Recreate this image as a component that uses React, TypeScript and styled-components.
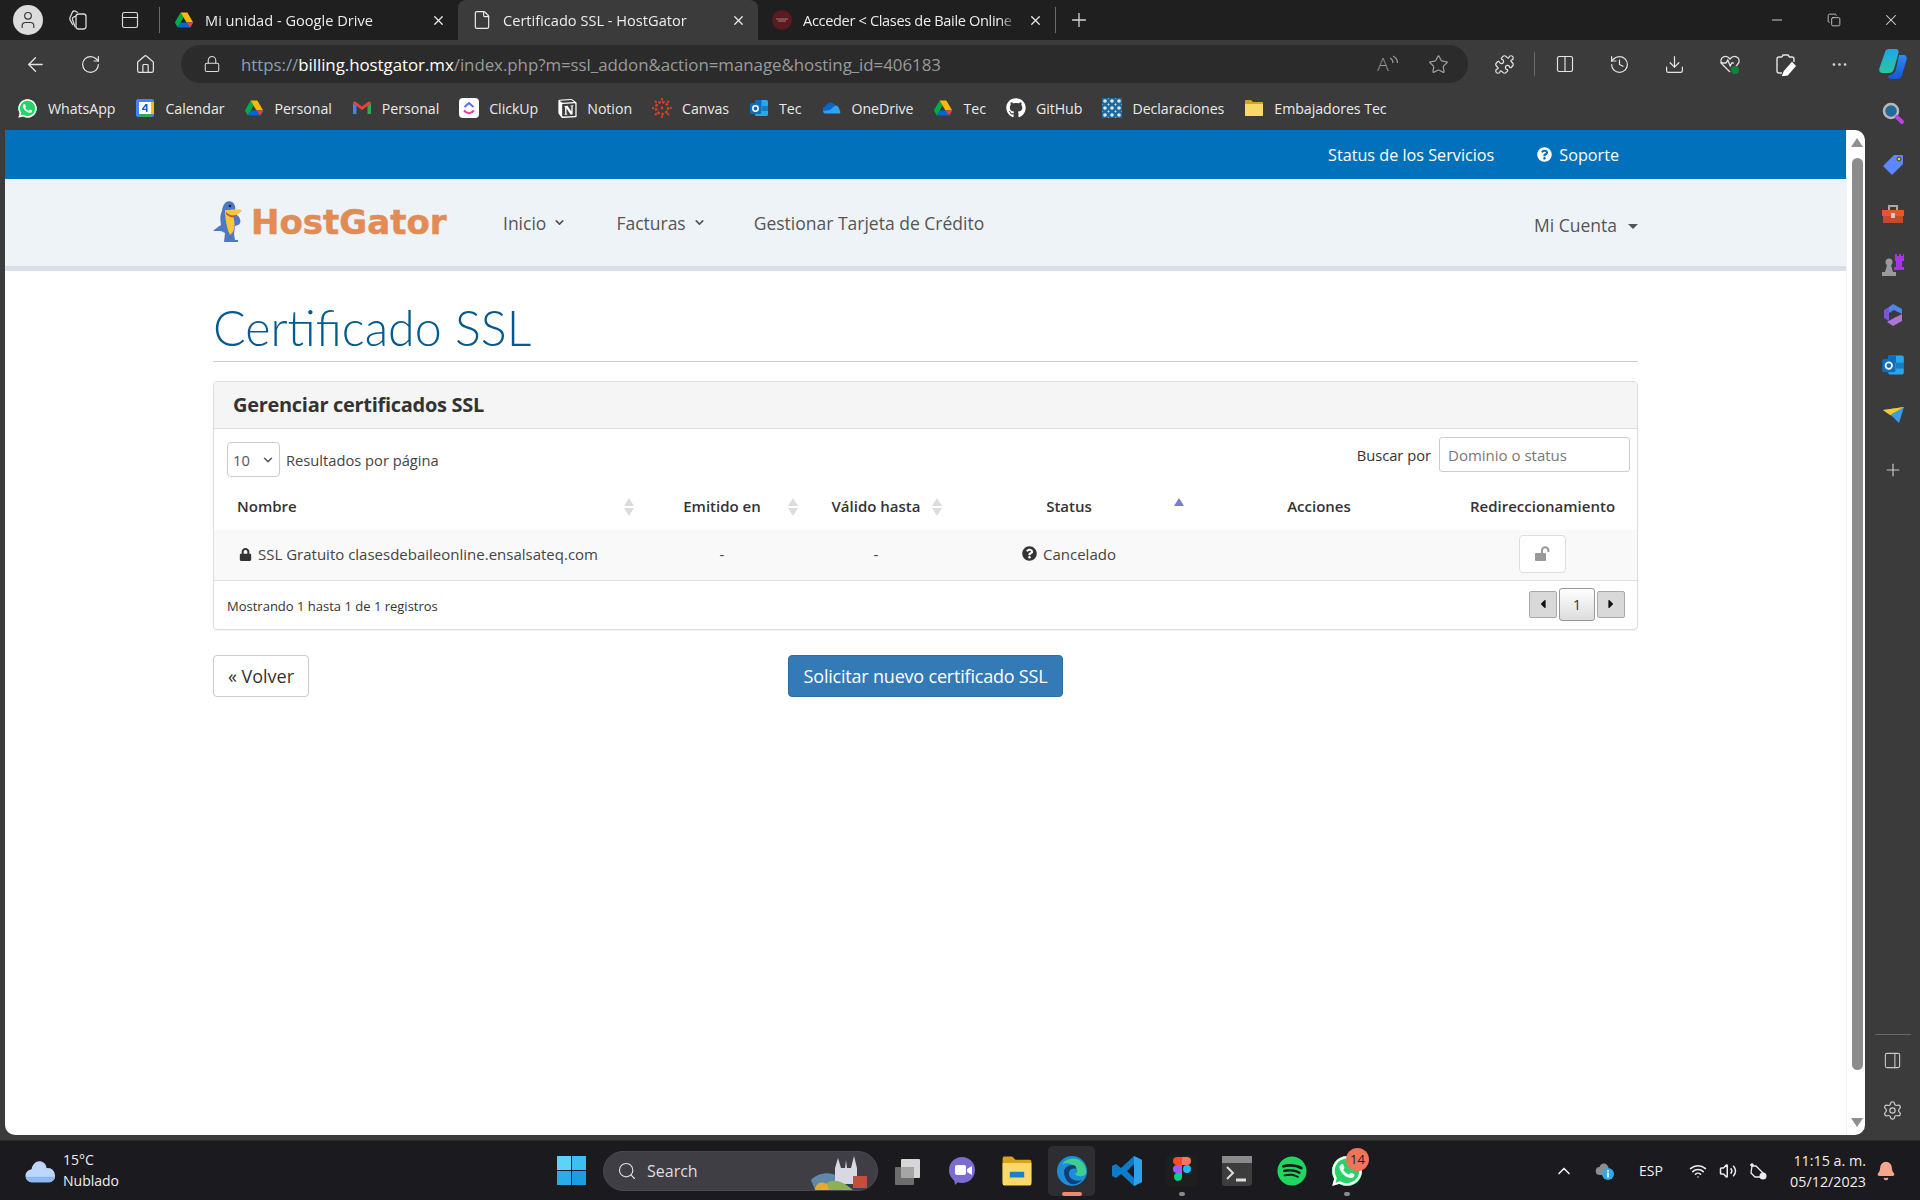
import React from 'react';
import styled, { createGlobalStyle } from 'styled-components';
import {
  ArrowLeft, RotateCw, Home, Lock, Star, Puzzle, Columns2, History, Download, MoreHorizontal,
  Search, Plus, Settings, PanelRight, X, Minus, Copy, User, ChevronUp, ChevronDown, Wifi, Volume2, File, PanelTop, Bell,
} from 'lucide-react';
import { FaLock, FaQuestionCircle, FaCaretLeft, FaCaretRight, FaWhatsapp, FaGithub, FaSpotify } from 'react-icons/fa';
import { SiNotion } from 'react-icons/si';

const GlobalStyle = createGlobalStyle`
  html, body { margin: 0; padding: 0; background: #3b3b3b; overflow: hidden; }
  * { box-sizing: border-box; }
`;

const Shell = styled.div`
  width: 1920px;
  height: 1200px;
  display: flex;
  flex-direction: column;
  font-family: "Open Sans", "Noto Sans", sans-serif;
  color: #fff;
`;

/* tab strip */
const TabStrip = styled.div`
  height: 40px;
  background: #1f1f1f;
  display: flex;
  align-items: center;
  flex: none;
`;

const StripSlot = styled.div<{ $w: number }>`
  width: ${(p) => p.$w}px;
  height: 40px;
  display: flex;
  align-items: center;
  justify-content: center;
  flex: none;
  color: #d8d8d8;
`;

const Avatar = styled.div`
  width: 30px;
  height: 30px;
  border-radius: 50%;
  background: #dcdcdc;
  color: #333;
  display: flex;
  align-items: center;
  justify-content: center;
`;

const Sep = styled.div<{ $h: number; $m?: number }>`
  width: 1px;
  height: ${(p) => p.$h}px;
  background: #6b6b6b;
  flex: none;
  margin: 0 ${(p) => p.$m ?? 0}px;
`;

const Tab = styled.div<{ $w: number; $active?: boolean }>`
  width: ${(p) => p.$w}px;
  height: 40px;
  padding: 0 12px 0 14px;
  display: flex;
  align-items: center;
  gap: 11px;
  flex: none;
  font-size: 14.6px;
  border-radius: ${(p) => (p.$active ? '8px 8px 0 0' : '0')};
  background: ${(p) => (p.$active ? '#3b3b3b' : 'transparent')};
  color: #ececec;
`;

const TabTitle = styled.span<{ $tight?: boolean }>`
  flex: 1;
  white-space: nowrap;
  overflow: hidden;
  letter-spacing: ${(p) => (p.$tight ? '-0.35px' : '0')};
  -webkit-mask-image: linear-gradient(90deg, #000 92%, transparent);
  mask-image: linear-gradient(90deg, #000 92%, transparent);
`;

const WinSpacer = styled.div`
  flex: 1;
`;

/* toolbar */
const Toolbar = styled.div`
  height: 50px;
  background: #3b3b3b;
  display: flex;
  align-items: center;
  padding: 0 0 2px 8px;
  flex: none;
`;

const ToolSlot = styled.div<{ $w?: number }>`
  width: ${(p) => p.$w ?? 55}px;
  height: 38px;
  display: flex;
  align-items: center;
  justify-content: center;
  color: #e4e4e4;
  flex: none;
`;

const AddressBar = styled.div`
  width: 1287px;
  height: 38px;
  margin: 0 8px;
  border-radius: 19px;
  background: #2b2b2b;
  display: flex;
  align-items: center;
  padding: 0 5px 0 22px;
  color: #dcdcdc;
  flex: none;
`;

const Url = styled.div`
  margin-left: 20px;
  flex: 1;
  font-size: 16.9px;
  color: #9a9a9a;
  white-space: nowrap;
  letter-spacing: -0.05px;

  b {
    font-weight: 400;
    color: #fff;
  }
  i {
    font-style: normal;
    color: #86a0b8;
  }
`;

const AddressTool = styled.div`
  width: 50px;
  display: flex;
  justify-content: center;
  align-items: center;
  color: #9c9c9c;
  font-size: 19px;
  font-weight: 300;
`;

/* bookmarks */
const Bookmarks = styled.div`
  height: 40px;
  padding: 0 0 4px 17px;
  display: flex;
  align-items: center;
  gap: 20px;
  flex: none;
`;

const Bookmark = styled.div`
  display: flex;
  align-items: center;
  gap: 10px;
  font-size: 14.2px;
  letter-spacing: -0.05px;
  color: #eaeaea;
  white-space: nowrap;
`;

const WhatsBubble = styled.span<{ $s: number }>`
  width: ${(p) => p.$s}px;
  height: ${(p) => p.$s}px;
  border-radius: 50%;
  background: radial-gradient(circle, #25d366 62%, transparent 64%);
  color: #fff;
  display: inline-flex;
  align-items: center;
  justify-content: center;
  position: relative;
  z-index: 1;
`;

const Middle = styled.div`
  flex: 1;
  display: flex;
  min-height: 0;
`;

const MainColumn = styled.div`
  width: 1865px;
  flex: none;
  display: flex;
  flex-direction: column;
`;

const Viewport = styled.div`
  height: 1005px;
  margin-left: 5px;
  background: #fff;
  border-radius: 0 10px 10px 10px;
  display: flex;
  overflow: hidden;
  flex: none;
`;

const Page = styled.div`
  width: 1841px;
  flex: none;
  color: #333;
`;

const ScrollTrack = styled.div`
  flex: 1;
  padding: 8px 4px 8px;
  display: flex;
  flex-direction: column;
  align-items: center;
  gap: 2px;
  border-left: 1px solid #f1f1f1;
`;

const ScrollArrow = styled.div<{ $down?: boolean }>`
  width: 0;
  height: 0;
  border-left: 6px solid transparent;
  border-right: 6px solid transparent;
  ${(p) => (p.$down ? 'border-top: 9px solid #8f8f8f;' : 'border-bottom: 9px solid #8f8f8f;')}
  flex: none;
`;

const ScrollThumb = styled.div`
  width: 11px;
  flex: none;
  height: 912px;
  margin-top: 9px;
  border-radius: 6px;
  background: #8c8c8c;
`;

const ScrollGap = styled.div`
  flex: 1;
`;

const TopBar = styled.div`
  height: 49px;
  background: #0271bc;
  color: #fff;
  display: flex;
  align-items: center;
  justify-content: flex-end;
  gap: 43px;
  padding-right: 227px;
  font-size: 16.2px;
`;

const TopLink = styled.span`
  display: flex;
  align-items: center;
  gap: 7px;
`;

const NavBar = styled.div`
  height: 92px;
  background: #eef3f8;
  border-bottom: 5px solid #d8dfe8;
  padding: 0 208px;
  display: flex;
  align-items: center;
  font-size: 17.5px;
  color: #555;
`;

const Logo = styled.div`
  width: 290px;
  display: flex;
  align-items: center;
  gap: 8px;
  flex: none;
  margin-top: -2px;
`;

const LogoText = styled.span`
  font-family: "DejaVu Sans", sans-serif;
  font-weight: 700;
  font-size: 34px;
  -webkit-text-stroke: 0.5px #e38b55;
  color: #e38b55;
`;

const NavLink = styled.span<{ $mr: number }>`
  display: flex;
  align-items: center;
  gap: 7px;
  margin-right: ${(p) => p.$mr}px;
`;

const AccountLink = styled.span`
  margin-left: auto;
  display: flex;
  align-items: center;
  gap: 11px;
  margin-top: 4px;
`;

const Caret = styled.span`
  width: 0;
  height: 0;
  margin-top: 3px;
  border-left: 5px solid transparent;
  border-right: 5px solid transparent;
  border-top: 5px solid #555;
`;

const Content = styled.div`
  padding: 0 208px;
`;

const Heading = styled.h1`
  margin: 0;
  height: 91px;
  padding-top: 28px;
  font-family: Lato, sans-serif;
  font-weight: 300;
  font-size: 48.4px;
  line-height: 56px;
  color: #035a8f;
  border-bottom: 1px solid #ccc;
`;

const Panel = styled.div`
  margin-top: 19px;
  height: 249px;
  border: 1px solid #ddd;
  border-radius: 4px;
  box-shadow: 0 1px 1px rgba(0, 0, 0, 0.05);
`;

const PanelHead = styled.div`
  height: 47px;
  background: #f5f5f5;
  border-bottom: 1px solid #ddd;
  border-radius: 3px 3px 0 0;
  padding: 0 0 2px 19px;
  display: flex;
  align-items: center;
  font-size: 20px;
  font-weight: 700;
  letter-spacing: -0.3px;
  color: #333;
`;

const Controls = styled.div`
  height: 61px;
  display: flex;
  justify-content: space-between;
  padding: 8px 7px 0 13px;
  font-size: 14.7px;
`;

const PageSize = styled.div`
  display: flex;
  align-items: center;
  align-self: flex-start;
  gap: 6px;
  margin-top: 5px;
  color: #444;
`;

const SelectBox = styled.div`
  width: 53px;
  height: 35px;
  border: 1px solid #ccc;
  border-radius: 4px;
  padding: 0 4px 0 5px;
  display: flex;
  align-items: center;
  justify-content: space-between;
  color: #555;
`;

const SearchGroup = styled.div`
  display: flex;
  align-items: center;
  gap: 8px;
  align-self: flex-start;
  color: #333;
`;

const SearchInput = styled.div`
  width: 191px;
  height: 35px;
  border: 1px solid #ccc;
  border-radius: 3px;
  padding-left: 8px;
  display: flex;
  align-items: center;
  font-size: 15px;
  color: #777;
`;

const Table = styled.table`
  width: 100%;
  border-collapse: collapse;
  table-layout: fixed;
  font-size: 15px;
`;

const Th = styled.th<{ $w?: number; $left?: boolean }>`
  position: relative;
  height: 40px;
  padding: 0 0 8px ${(p) => (p.$left ? 23 : 0)}px;
  width: ${(p) => (p.$w ? `${p.$w}px` : 'auto')};
  text-align: ${(p) => (p.$left ? 'left' : 'center')};
  font-weight: 600;
  color: #333;
`;

const SortIcon = styled.span`
  position: absolute;
  right: 6px;
  top: 8px;
  display: flex;
  flex-direction: column;
  gap: 2px;
`;

const SortUp = styled.i<{ $c: string }>`
  display: block;
  width: 0;
  height: 0;
  border-left: 5px solid transparent;
  border-right: 5px solid transparent;
  border-bottom: 8px solid ${(p) => p.$c};
`;

const SortDown = styled.i`
  display: block;
  width: 0;
  height: 0;
  border-left: 5px solid transparent;
  border-right: 5px solid transparent;
  border-top: 8px solid #dcdcdc;
`;

const Td = styled.td<{ $left?: boolean }>`
  height: 50px;
  padding: 0 0 1px ${(p) => (p.$left ? 25 : 0)}px;
  text-align: ${(p) => (p.$left ? 'left' : 'center')};
  background: #f9f9f9;
  border-bottom: 1px solid #ddd;
  color: #444;
`;

const CellIcon = styled.span`
  display: inline-flex;
  align-items: center;
  gap: 6px;
  color: #333;
  span {
    color: #444;
  }
`;

const RedirectBtn = styled.span`
  display: inline-flex;
  align-items: center;
  justify-content: center;
  width: 47px;
  height: 38px;
  border: 1px solid #ddd;
  border-radius: 4px;
  background: #fff;
  color: #999;
  vertical-align: middle;
`;

const PanelFoot = styled.div`
  height: 47px;
  padding: 0 12px 0 13px;
  display: flex;
  align-items: center;
  justify-content: space-between;
  font-size: 13px;
  color: #333;
`;

const FootText = styled.span`
  padding-top: 4px;
`;

const Pager = styled.div`
  display: flex;
  align-items: center;
  gap: 2px;
`;

const PagerArrow = styled.div`
  width: 28px;
  height: 27px;
  background: #d9d9d9;
  border: 1px solid #aaa;
  border-radius: 2px;
  color: #111;
  display: flex;
  align-items: center;
  justify-content: center;
`;

const PagerCurrent = styled.div`
  width: 36px;
  height: 33px;
  background: linear-gradient(#fff, #dcdcdc);
  border: 1px solid #979797;
  border-radius: 3px;
  font-size: 14px;
  color: #333;
  display: flex;
  align-items: center;
  justify-content: center;
`;

const Actions = styled.div`
  margin-top: 25px;
  display: flex;
`;

const BackBtn = styled.div`
  width: 96px;
  height: 42px;
  border: 1px solid #ccc;
  border-radius: 4px;
  display: flex;
  align-items: center;
  justify-content: center;
  font-size: 18px;
  color: #333;
`;

const PrimaryBtn = styled.div`
  width: 275px;
  height: 42px;
  margin-left: 479px;
  background: #337ab7;
  border: 1px solid #2e6da4;
  border-radius: 4px;
  color: #fff;
  font-size: 18px;
  letter-spacing: -0.2px;
  display: flex;
  align-items: center;
  justify-content: center;
`;

/* edge sidebar */
const Sidebar = styled.div`
  flex: 1;
  margin-top: -2px;
  display: flex;
  flex-direction: column;
  align-items: center;
`;

const SideIcon = styled.div<{ $mt?: number }>`
  height: 50px;
  width: 100%;
  margin-top: ${(p) => p.$mt ?? 0}px;
  display: flex;
  align-items: center;
  justify-content: center;
  color: #c9c9c9;
  flex: none;
`;

const SideRule = styled.div`
  width: 36px;
  height: 1px;
  margin-top: auto;
  background: #666;
`;

/* taskbar */
const Taskbar = styled.div`
  height: 60px;
  margin-top: 5px;
  background: #1b1a1e;
  border-top: 1px solid #2c2c2e;
  display: flex;
  align-items: center;
  flex: none;
  padding-left: 25px;
`;

const Weather = styled.div`
  width: 532px;
  display: flex;
  align-items: center;
  gap: 8px;
  flex: none;
  font-size: 14px;
  line-height: 21px;
  color: #eee;
`;

const WeatherText = styled.div`
  display: flex;
  flex-direction: column;
  margin-top: -2px;
`;

const SearchPill = styled.div`
  width: 275px;
  height: 40px;
  margin: 0 1px 0 17px;
  border-radius: 20px;
  background: #3f3e44;
  border: 1px solid #4a4950;
  display: flex;
  align-items: center;
  gap: 10px;
  padding-left: 13px;
  font-size: 16px;
  color: #ddd;
  position: relative;
  overflow: hidden;
  flex: none;
`;

const PillArt = styled.svg`
  position: absolute;
  right: 2px;
  top: 2px;
`;

const TaskSlot = styled.div<{ $active?: boolean; $dot?: boolean }>`
  width: 55px;
  height: 50px;
  flex: none;
  position: relative;
  display: flex;
  align-items: center;
  justify-content: center;
  &::before {
    content: '';
    position: absolute;
    z-index: 0;
    left: 4px;
    right: 4px;
    top: 0;
    bottom: 0;
    border-radius: 5px;
    background: ${(p) => (p.$active ? '#2d2d32' : 'transparent')};
  }
  &::after {
    content: '';
    position: absolute;
    bottom: 0;
    left: 50%;
    height: 4px;
    border-radius: 2px;
    width: ${(p) => (p.$active ? 20 : p.$dot ? 6 : 0)}px;
    transform: translateX(-50%);
    background: ${(p) => (p.$active ? '#f0886d' : '#8a8a8a')};
  }
  svg {
    position: relative;
    z-index: 1;
  }
`;

const Badge = styled.span`
  position: absolute;
  top: 2px;
  right: 5px;
  width: 23px;
  height: 23px;
  border-radius: 50%;
  background: #f0735a;
  color: #222;
  font-size: 13px;
  z-index: 2;
  display: flex;
  align-items: center;
  justify-content: center;
`;

const Tray = styled.div`
  margin-left: auto;
  padding-right: 14px;
  display: flex;
  align-items: center;
  color: #eee;
`;

const TraySlot = styled.div<{ $w: number; $ml?: number; $mr?: number }>`
  width: ${(p) => p.$w}px;
  margin: 0 ${(p) => p.$mr ?? 0}px 0 ${(p) => p.$ml ?? 0}px;
  display: flex;
  justify-content: center;
  font-size: 14px;
`;

const Clock = styled.div`
  width: 84px;
  text-align: right;
  font-size: 14.3px;
  line-height: 21px;
  color: #eee;
`;

const Drive = ({ s = 20 }: { s?: number }) => (
  <svg width={s} height={s} viewBox="0 0 24 24">
    <path fill="#00ac47" d="M8 3 1 15l3.500 6L11.500 9z" />
    <path fill="#ffba00" d="M8 3h8l7 12h-8z" />
    <path fill="#0066da" d="M4.500 21 8 15h15l-3.500 6z" />
    <path fill="#ea4335" d="M15 15h8l-3.500 6z" />
  </svg>
);

const Gator = () => (
  <svg width="30" height="42" viewBox="0 0 30 42">
    <path fill="#4f78c4" d="M13 1c4-2 8 0 9 4 1 3-1 4 0 7l4 4c2 3 2 7-1 8l-3 1-1 8 1 6h3v2H11l1-9-4-2H0c2-2 5-4 8-6-1-6-1-10 1-14 0-4 2-7 4-9z" />
    <path fill="#f6c63c" d="M12 9c5 0 11-1 17 0-1 3-5 5-9 6 2 5 2 12 0 16l-3 3c-3-6-5-16-5-25z" />
    <path fill="#d9483b" d="M13 11c3 3 6 4 9 3l-1 2c-3 1-6-1-8-3z" />
    <circle cx="17" cy="5" r="1.300" fill="#123" />
  </svg>
);

const UnlockIcon = () => (
  <svg width="18" height="16" viewBox="0 0 18 16" fill="#999">
    <rect x="1" y="7" width="11" height="8" rx="1" />
    <path fill="none" stroke="#999" strokeWidth="2" d="M8 7V4.500a3.200 3.200 0 0 1 6.400 0V6" />
  </svg>
);

const Collections = () => (
  <svg width="24" height="24" viewBox="0 0 24 24" fill="none" stroke="currentColor" strokeWidth="1.300">
    <rect x="10" y="6" width="10" height="15" rx="2.500" />
    <path d="M10 8 7.500 9.200c-1 .5-1.300 1.400-1 2.400l2.800 7.600" />
    <path d="M12 4.500 9 3.200c-1-.4-2-.1-2.500.9L4 9.500c-.4 1-.3 1.800.2 2.600l2.800 5" />
  </svg>
);

const Calendar = () => (
  <svg width="20" height="20" viewBox="0 0 20 20">
    <rect x="1" y="1" width="18" height="18" rx="2" fill="#4285f4" />
    <rect x="4" y="4" width="12" height="12" fill="#fff" />
    <path fill="#34a853" d="M4 16h12v3H4z" />
    <path fill="#fbbc04" d="M16 4h3v12h-3z" />
    <path fill="#1a56c4" d="M11 6h1.500v8H11V12H7v-1.300L10.500 6zM8.500 10.800H11V8z" />
  </svg>
);

const Gmail = () => (
  <svg width="20" height="20" viewBox="0 0 20 20">
    <path fill="#4285f4" d="M1 5v11h3.500V8z" />
    <path fill="#34a853" d="M19 5v11h-3.500V8z" />
    <path fill="#ea4335" d="M1 5c0-1.500 2-2 3-1l6 4.500L16 4c1-1 3-.5 3 1l-3.500 3L10 12 4.500 8z" />
  </svg>
);

const ClickUp = () => (
  <svg width="20" height="20" viewBox="0 0 20 20">
    <rect width="20" height="20" rx="4" fill="#fff" />
    <path fill="none" stroke="#f0389a" strokeWidth="2" d="M5 12.500c3 3.500 7 3.500 10 0" />
    <path fill="none" stroke="#5a6cf0" strokeWidth="2" d="m5.500 9 4.500-4 4.500 4" />
  </svg>
);

const Canvas = () => (
  <svg width="20" height="20" viewBox="0 0 20 20" fill="#d63c2b">
    <path fill="none" stroke="#d63c2b" strokeWidth="2.600" strokeDasharray="2.600 1.600" d="M10 4a6 6 0 1 1-.01 0z" />
    <circle cx="10" cy="10" r="1.400" />
    <circle cx="10" cy="1.200" r="1.200" />
    <circle cx="10" cy="18.800" r="1.200" />
    <circle cx="1.200" cy="10" r="1.200" />
    <circle cx="18.800" cy="10" r="1.200" />
    <circle cx="3.800" cy="3.800" r="1.200" />
    <circle cx="16.200" cy="3.800" r="1.200" />
    <circle cx="3.800" cy="16.200" r="1.200" />
    <circle cx="16.200" cy="16.200" r="1.200" />
  </svg>
);

const Outlook = ({ s = 20 }: { s?: number }) => (
  <svg width={s} height={s} viewBox="0 0 20 20">
    <rect x="6" y="2" width="13" height="16" rx="1.500" fill="#28a8ea" />
    <path fill="#0f6cbd" d="M6 2h6.500v6H6z" />
    <path fill="#0a4f94" d="M12.500 8H19v5h-6.500z" opacity=".5" />
    <rect x="1" y="5" width="11" height="11" rx="1.500" fill="#0f6cbd" />
    <circle cx="6.500" cy="10.500" r="2.700" fill="none" stroke="#fff" strokeWidth="1.500" />
  </svg>
);

const OneDrive = () => (
  <svg width="20" height="20" viewBox="0 0 20 20">
    <path fill="#0a64c9" d="M8 5c2.500-1 5 0 6 2.500L9 13H2c-1-2 0-4 2-4.500C5 6.500 6.500 5.500 8 5z" />
    <path fill="#2da5ec" d="M14 7.500c2.500 0 4.500 2 4.500 4.500 1 1 1 2.500.5 3.500H4.500C3 15.500 2 14.500 2 13l7-1z" />
  </svg>
);

const Declaraciones = () => (
  <svg width="20" height="20" viewBox="0 0 20 20">
    <rect width="20" height="20" fill="#dce9f0" />
    {[3, 10, 17].map((y) =>
      [3, 10, 17].map((x) => (
        <circle key={`${x}-${y}`} cx={x} cy={y} r="3" fill="none" stroke="#1c6d9e" strokeWidth="2.400" />
      )),
    )}
  </svg>
);

const Folder = ({ s = 20 }: { s?: number }) => (
  <svg width={s} height={s} viewBox="0 0 20 20">
    <path fill="#d9a21c" d="M1 3a1 1 0 0 1 1-1h5l2 2h9a1 1 0 0 1 1 1v12a1 1 0 0 1-1 1H2a1 1 0 0 1-1-1z" />
    <path fill="#fbd968" d="M1 6h18v11a1 1 0 0 1-1 1H2a1 1 0 0 1-1-1z" />
  </svg>
);

const TaskFolder = () => (
  <svg width="32" height="32" viewBox="0 0 20 20">
    <path fill="#d9a21c" d="M1 2a1 1 0 0 1 1-1h5l2 2h9a1 1 0 0 1 1 1v13a1 1 0 0 1-1 1H2a1 1 0 0 1-1-1z" />
    <path fill="#fbd968" d="M1 5h18v13a1 1 0 0 1-1 1H2a1 1 0 0 1-1-1z" />
    <path fill="#1b7fd1" d="M6 10.500h8a.5.5 0 0 1 .5.5v3h-9v-3a.5.5 0 0 1 .5-.5z" />
  </svg>
);

const HealthIcon = () => (
  <svg width="24" height="24" viewBox="0 0 24 24" fill="none" stroke="currentColor" strokeWidth="1.300">
    <path d="M12 20 4.500 12.500C2 10 2.500 6 5.500 4.800 8 3.800 10.500 5 12 7c1.500-2 4-3.200 6.500-2.200 3 1.200 3.500 5.200 1 7.700L18 14" />
    <path d="M2.500 11H8l1.800-3 2.400 6 1.600-3h2" />
    <circle cx="17" cy="18" r="4" fill="#15803d" stroke="none" />
  </svg>
);

const CollectPen = () => (
  <svg width="24" height="24" viewBox="0 0 24 24" fill="none" stroke="currentColor" strokeWidth="1.400">
    <path d="M9 5 10 3h5l1.500 2H19a2 2 0 0 1 2 2v3M9 21H6a2 2 0 0 1-2-2V7a2 2 0 0 1 2-2h3" />
    <path stroke="#fff" strokeWidth="3" d="m12 20 7-8 2 2-7 8-3 .5z" />
  </svg>
);

const ReadArcs = () => (
  <svg width="10" height="18" viewBox="0 0 10 18" fill="none" stroke="currentColor" strokeWidth="1.200">
    <path d="M1 3c2 1 3 3 3 5M4 1c3 1.500 4.500 4 4.500 7" />
  </svg>
);

const Copilot = () => (
  <svg width="30" height="34" viewBox="0 0 30 34">
    <defs>
      <linearGradient id="copA" x1="0" y1="0" x2="0" y2="1">
        <stop offset="0" stopColor="#1fa6e8" />
        <stop offset="1" stopColor="#2cc4a0" />
      </linearGradient>
      <linearGradient id="copB" x1="0" y1="0" x2="0" y2="1">
        <stop offset="0" stopColor="#2b8cf0" />
        <stop offset="1" stopColor="#1457d8" />
      </linearGradient>
    </defs>
    <path fill="url(#copA)" d="M11 2h7c2 0 3 2 2.500 4L16 22c-.8 2.500-2.500 4-5 4H5c-3 0-4.500-2-3.500-5L7 5c.6-2 2-3 4-3z" />
    <path fill="url(#copB)" d="M21 8h4c3 0 4.500 2 3.500 5L24 28c-.8 3-2.500 4-5 4h-6c-2 0-3-1-2.500-3l3-1.500c2.500-1 4-3 4.500-5z" />
  </svg>
);

const Windows = () => (
  <svg width="29" height="29" viewBox="0 0 29 29">
    <path fill="#5fd3f7" d="M0 0h14v14H0z" />
    <path fill="#3cc0f3" d="M15 0h14v14H15z" />
    <path fill="#2bace9" d="M0 15h14v14H0z" />
    <path fill="#1e9ce2" d="M15 15h14v14H15z" />
  </svg>
);

const Edge = () => (
  <svg width="32" height="32" viewBox="0 0 32 32">
    <circle cx="16" cy="16" r="15" fill="#1a8fd8" />
    <path fill="#3ecf8e" d="M6 10c3-7 14-9 20-3 3 3 5 8 4 12-3 3-9 3-11 0 3-1 3-4 1-6-4-5-11-6-14-3z" />
    <path fill="#123f78" d="M8 17c0-4 4-7 8-7 3 0 5 2 4 4-5-2-9 3-6 8 2 3 7 5 12 3-3 3-7 5-11 4-4-2-7-7-7-12z" />
  </svg>
);

const VsCode = () => (
  <svg width="30" height="32" viewBox="0 0 30 32">
    <path fill="#0a7cc8" d="M22 1 30 5v22l-8 4-13-12-5 4-4-2v-10l4-2 5 4zM22 9l-7 7 7 7z" />
    <path fill="#29a3ec" d="M22 1 30 5v22l-8 4z" />
  </svg>
);

const Figma = () => (
  <svg width="32" height="32" viewBox="0 0 32 32">
    <rect width="32" height="32" rx="4" fill="#1e1e1e" />
    <path fill="#f24e1e" d="M11 2h5v8h-5a4 4 0 0 1 0-8z" />
    <path fill="#ff7262" d="M16 2h5a4 4 0 0 1 0 8h-5z" />
    <path fill="#a259ff" d="M11 10h5v8h-5a4 4 0 0 1 0-8z" />
    <circle cx="21" cy="14" r="4" fill="#1abcfe" />
    <path fill="#0acf83" d="M11 18h5v4a4 4 0 1 1-5-4z" />
  </svg>
);

const Terminal = () => (
  <svg width="30" height="30" viewBox="0 0 30 30">
    <rect width="30" height="30" rx="3" fill="#3d3d3d" />
    <rect width="30" height="7" fill="#8a8a8a" />
    <path fill="none" stroke="#ddd" strokeWidth="2" d="m5 11 6 6-6 6" />
    <path stroke="#ddd" strokeWidth="3" d="M14 24h10" />
  </svg>
);

const Teams = () => (
  <svg width="30" height="30" viewBox="0 0 30 30">
    <circle cx="15" cy="14" r="13" fill="#7b6ccf" />
    <path fill="#7b6ccf" d="M7 22h8l-7 7z" />
    <rect x="8" y="9" width="11" height="10" rx="2" fill="#fff" />
    <path fill="#fff" d="m20 13 5-3v9l-5-3z" />
  </svg>
);

const TaskView = () => (
  <svg width="30" height="30" viewBox="0 0 30 30">
    <rect x="3" y="11" width="19" height="18" rx="1" fill="#6d6d6d" />
    <rect x="9" y="3" width="19" height="19" rx="1" fill="#d6d6d6" />
    <rect x="9" y="11" width="13" height="11" fill="#a5a5a5" />
  </svg>
);

const WeatherCloud = () => (
  <svg width="30" height="24" viewBox="0 0 32 24">
    <path fill="#bcd7fa" d="M8 24a7 7 0 0 1-1-14c1-6 6-10 11-8 3 1 5 4 5 7 5-1 9 3 9 8 0 4-3 7-7 7z" />
    <path fill="#8eb8f2" d="M1 18h31c0 3-3 6-7 6H8c-4 0-6-3-7-6z" />
  </svg>
);

const TrayCloud = () => (
  <svg width="22" height="22" viewBox="0 0 22 22">
    <path fill="#8d8d8d" d="M6 15a4 4 0 0 1-.5-8c1-3.500 5-4.500 7.500-2 1 .8 1.500 2 1.500 3l-2 7z" />
    <circle cx="14" cy="14" r="6" fill="#35a7e8" />
    <rect x="13.200" y="12.500" width="1.600" height="5" fill="#fff" />
    <rect x="13.200" y="10" width="1.600" height="1.600" fill="#fff" />
  </svg>
);

const TrayBattery = () => (
  <svg width="22" height="22" viewBox="0 0 22 22" fill="none" stroke="#eee" strokeWidth="1.300">
    <path d="M5 6h4l8 8v3H8L4 13z" />
    <path d="M5 3v4M3 5h4" />
    <circle cx="16" cy="16" r="3.500" fill="#eee" stroke="none" />
  </svg>
);

const TagIcon = () => (
  <svg width="24" height="24" viewBox="0 0 24 24">
    <path fill="#5d86ff" d="M13 2h8a1 1 0 0 1 1 1v8L11 22 2 13z" />
    <circle cx="18" cy="6" r="2" fill="#ffd21e" stroke="#333" />
  </svg>
);

const ToolboxIcon = () => (
  <svg width="24" height="24" viewBox="0 0 24 24">
    <path fill="none" stroke="#aaa" strokeWidth="2" d="M8 7V3h8v4" />
    <path fill="#e5562c" d="M1 7h22v6H1z" />
    <path fill="#c64a25" d="M2 13h20v7H2z" />
    <rect x="10" y="10" width="4" height="5" fill="#ccc" />
  </svg>
);

const ChessIcon = () => (
  <svg width="24" height="24" viewBox="0 0 24 24">
    <path fill="#a933e8" d="M14 1h2v2h2V1h2v2h2V1h1v7h-2v6h2v3H13v-3h2V8h-1z" />
    <circle cx="8" cy="9" r="3.500" fill="#9a9a9a" />
    <path fill="#9a9a9a" d="M6 12h4l2 7H4zM1 19h14v4H1z" />
  </svg>
);

const M365 = () => (
  <svg width="24" height="24" viewBox="0 0 24 24">
    <path fill="#4c86e8" d="M12 1l9 5v5l-8-4-5 3V4z" />
    <path fill="#7d56cf" d="M3 7l5-3v14l-5-3z" />
    <path fill="#b073d8" d="M6 19l7-4 8-4v7l-9 5z" />
  </svg>
);

const SendIcon = () => (
  <svg width="24" height="24" viewBox="0 0 24 24">
    <path fill="#3a9be8" d="M2 7 23 4l-5 16-6-6z" />
    <path fill="#ffc91f" d="M2 7l21-3L9 12z" />
  </svg>
);

const MagnifierIcon = () => (
  <svg width="24" height="24" viewBox="0 0 24 24">
    <circle cx="10" cy="10" r="7" fill="#1f6a9e" stroke="#b8b8b8" strokeWidth="2.500" />
    <path stroke="#c43fe0" strokeWidth="4" strokeLinecap="round" d="m16 16 5 5" />
  </svg>
);

const bookmarks: [React.ReactNode, string][] = [
  [<WhatsBubble $s={21}><FaWhatsapp size={21} /></WhatsBubble>, 'WhatsApp'],
  [<Calendar />, 'Calendar'],
  [<Drive />, 'Personal'],
  [<Gmail />, 'Personal'],
  [<ClickUp />, 'ClickUp'],
  [<SiNotion size={19} color="#fff" />, 'Notion'],
  [<Canvas />, 'Canvas'],
  [<Outlook />, 'Tec'],
  [<OneDrive />, 'OneDrive'],
  [<Drive />, 'Tec'],
  [<FaGithub size={20} color="#fff" />, 'GitHub'],
  [<Declaraciones />, 'Declaraciones'],
  [<Folder />, 'Embajadores Tec'],
];

const thin = { strokeWidth: 1.4 };

const App: React.FC = () => {
  return (
    <>
      <GlobalStyle />
      <Shell>
        <TabStrip>
          <StripSlot $w={55}><Avatar><User size={20} {...thin} /></Avatar></StripSlot>
          <StripSlot $w={46}><Collections /></StripSlot>
          <StripSlot $w={58}><PanelTop size={20} {...thin} /></StripSlot>
          <Sep $h={26} />
          <Tab $w={298}>
            <Drive />
            <TabTitle>Mi unidad - Google Drive</TabTitle>
            <X size={15} />
          </Tab>
          <Tab $w={300} $active>
            <File size={20} {...thin} />
            <TabTitle>Certificado SSL - HostGator</TabTitle>
            <X size={15} />
          </Tab>
          <Tab $w={297}>
            <svg width="20" height="20" viewBox="0 0 20 20"><circle cx="10" cy="10" r="10" fill="#5a1a1f" /><path stroke="#b99" strokeWidth="0.800" d="M4 9h12M6 11h8" /></svg>
            <TabTitle $tight>Acceder &lt; Clases de Baile Online</TabTitle>
            <X size={15} />
          </Tab>
          <Sep $h={26} />
          <StripSlot $w={46}><Plus size={22} {...thin} /></StripSlot>
          <WinSpacer />
          <StripSlot $w={57}><Minus size={16} {...thin} /></StripSlot>
          <StripSlot $w={57}><Copy size={14} {...thin} /></StripSlot>
          <StripSlot $w={58}><X size={18} {...thin} /></StripSlot>
        </TabStrip>

        <Toolbar>
          <ToolSlot><ArrowLeft size={23} {...thin} /></ToolSlot>
          <ToolSlot><RotateCw size={21} {...thin} /></ToolSlot>
          <ToolSlot><Home size={21} {...thin} /></ToolSlot>
          <AddressBar>
            <Lock size={18} {...thin} />
            <Url><i>https://</i><b>billing.hostgator.mx</b>/index.php?m=ssl_addon&amp;action=manage&amp;hosting_id=406183</Url>
            <AddressTool>A<ReadArcs /></AddressTool>
            <AddressTool><Star size={21} {...thin} /></AddressTool>
          </AddressBar>
          <ToolSlot $w={56}><Puzzle size={21} {...thin} /></ToolSlot>
          <Sep $h={24} $m={2} />
          <ToolSlot><Columns2 size={20} {...thin} /></ToolSlot>
          <ToolSlot><History size={21} {...thin} /></ToolSlot>
          <ToolSlot><Download size={21} {...thin} /></ToolSlot>
          <ToolSlot><HealthIcon /></ToolSlot>
          <ToolSlot><CollectPen /></ToolSlot>
          <ToolSlot><MoreHorizontal size={19} {...thin} /></ToolSlot>
          <ToolSlot $w={52}><Copilot /></ToolSlot>
        </Toolbar>

        <Middle>
          <MainColumn>
            <Bookmarks>
              {bookmarks.map(([icon, label], i) => (
                <Bookmark key={i}>{icon}{label}</Bookmark>
              ))}
            </Bookmarks>
            <Viewport>
              <Page>
                <TopBar>
                  <span>Status de los Servicios</span>
                  <TopLink><FaQuestionCircle size={15} />Soporte</TopLink>
                </TopBar>
                <NavBar>
                  <Logo><Gator /><LogoText>HostGator</LogoText></Logo>
                  <NavLink $mr={50}><span>Inicio</span><ChevronDown size={13} strokeWidth={3} /></NavLink>
                  <NavLink $mr={48}><span>Facturas</span><ChevronDown size={13} strokeWidth={3} /></NavLink>
                  <NavLink $mr={0}>Gestionar Tarjeta de Crédito</NavLink>
                  <AccountLink>Mi Cuenta <Caret /></AccountLink>
                </NavBar>
                <Content>
                  <Heading>Certificado SSL</Heading>
                  <Panel>
                    <PanelHead>Gerenciar certificados SSL</PanelHead>
                    <Controls>
                      <PageSize>
                        <SelectBox>10<ChevronDown size={14} strokeWidth={2.5} /></SelectBox>
                        Resultados por página
                      </PageSize>
                      <SearchGroup>
                        Buscar por
                        <SearchInput>Dominio o status</SearchInput>
                      </SearchGroup>
                    </Controls>
                    <Table>
                      <thead>
                        <tr>
                          <Th $left $w={426}>Nombre<SortIcon><SortUp $c="#dcdcdc" /><SortDown /></SortIcon></Th>
                          <Th $w={164}>Emitido en<SortIcon><SortUp $c="#dcdcdc" /><SortDown /></SortIcon></Th>
                          <Th $w={144}>Válido hasta<SortIcon><SortUp $c="#dcdcdc" /><SortDown /></SortIcon></Th>
                          <Th $w={242}>Status<SortIcon><SortUp $c="#7b7bdc" /></SortIcon></Th>
                          <Th $w={258}>Acciones</Th>
                          <Th>Redireccionamiento</Th>
                        </tr>
                      </thead>
                      <tbody>
                        <tr>
                          <Td $left><CellIcon><FaLock size={13} /><span>SSL Gratuito clasesdebaileonline.ensalsateq.com</span></CellIcon></Td>
                          <Td>-</Td>
                          <Td>-</Td>
                          <Td><CellIcon><FaQuestionCircle size={15} /><span>Cancelado</span></CellIcon></Td>
                          <Td />
                          <Td><RedirectBtn><UnlockIcon /></RedirectBtn></Td>
                        </tr>
                      </tbody>
                    </Table>
                    <PanelFoot>
                      <FootText>Mostrando 1 hasta 1 de 1 registros</FootText>
                      <Pager>
                        <PagerArrow><FaCaretLeft size={14} /></PagerArrow>
                        <PagerCurrent>1</PagerCurrent>
                        <PagerArrow><FaCaretRight size={14} /></PagerArrow>
                      </Pager>
                    </PanelFoot>
                  </Panel>
                  <Actions>
                    <BackBtn>« Volver</BackBtn>
                    <PrimaryBtn>Solicitar nuevo certificado SSL</PrimaryBtn>
                  </Actions>
                </Content>
              </Page>
              <ScrollTrack>
                <ScrollArrow />
                <ScrollThumb />
                <ScrollGap />
                <ScrollArrow $down />
              </ScrollTrack>
            </Viewport>
          </MainColumn>
          <Sidebar>
            <SideIcon><MagnifierIcon /></SideIcon>
            <SideIcon $mt={2}><TagIcon /></SideIcon>
            <SideIcon><ToolboxIcon /></SideIcon>
            <SideIcon><ChessIcon /></SideIcon>
            <SideIcon><M365 /></SideIcon>
            <SideIcon><Outlook s={24} /></SideIcon>
            <SideIcon><SendIcon /></SideIcon>
            <SideIcon $mt={5}><Plus size={20} {...thin} /></SideIcon>
            <SideRule />
            <SideIcon><PanelRight size={19} {...thin} /></SideIcon>
            <SideIcon><Settings size={21} {...thin} /></SideIcon>
          </Sidebar>
        </Middle>

        <Taskbar>
          <Weather>
            <WeatherCloud />
            <WeatherText><span>15°C</span><span>Nublado</span></WeatherText>
          </Weather>
          <Windows />
          <SearchPill>
            <Search size={20} {...thin} />
            Search
            <PillArt width="64" height="36" viewBox="0 0 64 36">
              <path fill="#5f89a8" d="M0 26c8-8 20-8 26-4v14H4z" />
              <path fill="#d8d8e0" d="M24 30V14l3-10 3 10h4l1-8 1 8h4l3-12 3 12v16z" />
              <path fill="#c24f3c" d="M42 22h14v12H42z" />
              <path fill="#8fb04e" d="M12 36c2-10 12-12 22-6l8 6z" />
              <path fill="#e9a72c" d="M4 36c0-6 6-10 12-6l2 6z" />
            </PillArt>
          </SearchPill>
          <TaskSlot><TaskView /></TaskSlot>
          <TaskSlot><Teams /></TaskSlot>
          <TaskSlot><TaskFolder /></TaskSlot>
          <TaskSlot $active><Edge /></TaskSlot>
          <TaskSlot><VsCode /></TaskSlot>
          <TaskSlot $dot><Figma /></TaskSlot>
          <TaskSlot><Terminal /></TaskSlot>
          <TaskSlot><FaSpotify size={30} color="#1ed760" /></TaskSlot>
          <TaskSlot $dot><WhatsBubble $s={34}><FaWhatsapp size={34} /></WhatsBubble><Badge>14</Badge></TaskSlot>
          <Tray>
            <TraySlot $w={36}><ChevronUp size={20} /></TraySlot>
            <TraySlot $w={46}><TrayCloud /></TraySlot>
            <TraySlot $w={46}>ESP</TraySlot>
            <TraySlot $w={30} $ml={9}><Wifi size={18} /></TraySlot>
            <TraySlot $w={30}><Volume2 size={18} /></TraySlot>
            <TraySlot $w={30} $mr={9}><TrayBattery /></TraySlot>
            <Clock>11:15 a. m.<br />05/12/2023</Clock>
            <TraySlot $w={40}><Bell size={20} color="#f4a58c" fill="#f4a58c" /></TraySlot>
          </Tray>
        </Taskbar>
      </Shell>
    </>
  );
};

export default App;
